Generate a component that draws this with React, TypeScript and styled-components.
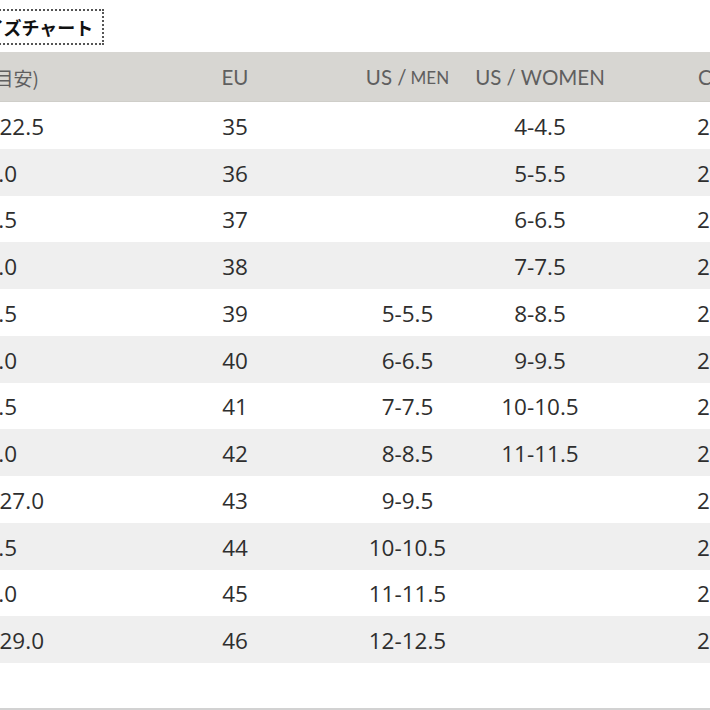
import React from "react";
import styled, { createGlobalStyle } from "styled-components";

const GlobalStyle = createGlobalStyle`
  html, body { margin: 0; padding: 0; background: #fff; }
  body { width: 710px; height: 710px; overflow: hidden; }
`;

const Frame = styled.div`
  width: 710px;
  height: 710px;
  overflow: hidden;
  display: flex;
  flex-direction: column;
  background: #fff;
`;

const TitleBar = styled.div`
  height: 45px;
  padding-top: 9px;
  box-sizing: border-box;
  display: flex;
`;

const TitleBox = styled.div`
  margin-left: -44px;
  height: 36px;
  box-sizing: border-box;
  padding: 0 9px 0 10px;
  border: 2px dotted #555;
  display: flex;
  align-items: center;
  font-family: "Noto Sans CJK JP", sans-serif;
  font-weight: 700;
  font-size: 18px;
  color: #111;
  white-space: nowrap;
`;

const Table = styled.div`
  margin-top: 7px;
  margin-left: -150px;
  width: 860px;
  display: flex;
  flex-direction: column;
`;

const cols = "300px 170px 175px 90px 1fr";

const HeadRow = styled.div`
  display: grid;
  grid-template-columns: ${cols};
  height: 50px;
  padding-top: 1px;
  background: #d7d6d2;
  border-bottom: 1px solid #cfcec9;
  box-sizing: border-box;
  font-family: Lato, "Noto Sans CJK JP", sans-serif;
  font-size: 20.5px;
  color: #5f5f5f;
`;

const Row = styled.div<{ $striped: boolean }>`
  display: grid;
  grid-template-columns: ${cols};
  height: 46.75px;
  padding-top: 2px;
  box-sizing: border-box;
  background: ${(p) => (p.$striped ? "#efefef" : "#ffffff")};
  font-family: "Open Sans", sans-serif;
  font-size: 22.5px;
  color: #2e2e2e;
`;

const Cell = styled.div<{ $align?: "center" | "left" | "right"; $pr?: number; $pl?: number }>`
  display: flex;
  align-items: center;
  justify-content: ${(p) =>
    p.$align === "left" ? "flex-start" : p.$align === "right" ? "flex-end" : "center"};
  padding-right: ${(p) => p.$pr ?? 0}px;
  padding-left: ${(p) => p.$pl ?? 0}px;
  white-space: nowrap;
  min-width: 0;
`;

const Shifted = styled.span<{ $shift: number }>`
  display: inline-block;
  margin-right: ${(p) => p.$shift}px;
`;

const Small = styled.span`
  font-size: 17px;
  margin-left: 4px;
`;

const HeadCjk = styled.span`
  font-family: "Noto Sans CJK JP", sans-serif;
  font-size: 19px;
`;

const Spacer = styled.div`
  flex: 1;
  border-bottom: 2px solid #d2d2d2;
`;

type R = { jp: string; shift: number; eu: string; men: string; women: string; last: string };

const rows: R[] = [
  { jp: "22.5", shift: 0, eu: "35", men: "", women: "4-4.5", last: "220" },
  { jp: "23.0", shift: 27, eu: "36", men: "", women: "5-5.5", last: "225" },
  { jp: "23.5", shift: 27, eu: "37", men: "", women: "6-6.5", last: "230" },
  { jp: "24.0", shift: 27, eu: "38", men: "", women: "7-7.5", last: "235" },
  { jp: "24.5", shift: 27, eu: "39", men: "5-5.5", women: "8-8.5", last: "240" },
  { jp: "25.0", shift: 27, eu: "40", men: "6-6.5", women: "9-9.5", last: "245" },
  { jp: "25.5", shift: 27, eu: "41", men: "7-7.5", women: "10-10.5", last: "250" },
  { jp: "26.0", shift: 27, eu: "42", men: "8-8.5", women: "11-11.5", last: "255" },
  { jp: "27.0", shift: 0, eu: "43", men: "9-9.5", women: "", last: "260" },
  { jp: "27.5", shift: 27, eu: "44", men: "10-10.5", women: "", last: "265" },
  { jp: "28.0", shift: 27, eu: "45", men: "11-11.5", women: "", last: "270" },
  { jp: "29.0", shift: 0, eu: "46", men: "12-12.5", women: "", last: "275" },
];

export default function App() {
  return (
    <>
      <GlobalStyle />
      <Frame>
        <TitleBar>
          <TitleBox>サイズチャート</TitleBox>
        </TitleBar>
        <Table>
          <HeadRow>
            <Cell $align="right" $pr={111}>
              <HeadCjk>サイズ(目安)</HeadCjk>
            </Cell>
            <Cell>EU</Cell>
            <Cell>
              US /<Small>MEN</Small>
            </Cell>
            <Cell>US / WOMEN</Cell>
            <Cell $align="left" $pl={113}>
              CN
            </Cell>
          </HeadRow>
          {rows.map((r, i) => (
            <Row key={r.eu} $striped={i % 2 === 1}>
              <Cell $align="right" $pr={106}>
                <Shifted $shift={r.shift}>{r.jp}</Shifted>
              </Cell>
              <Cell>{r.eu}</Cell>
              <Cell>{r.men}</Cell>
              <Cell>{r.women}</Cell>
              <Cell $align="left" $pl={112}>
                {r.last}
              </Cell>
            </Row>
          ))}
        </Table>
        <Spacer />
      </Frame>
    </>
  );
}
